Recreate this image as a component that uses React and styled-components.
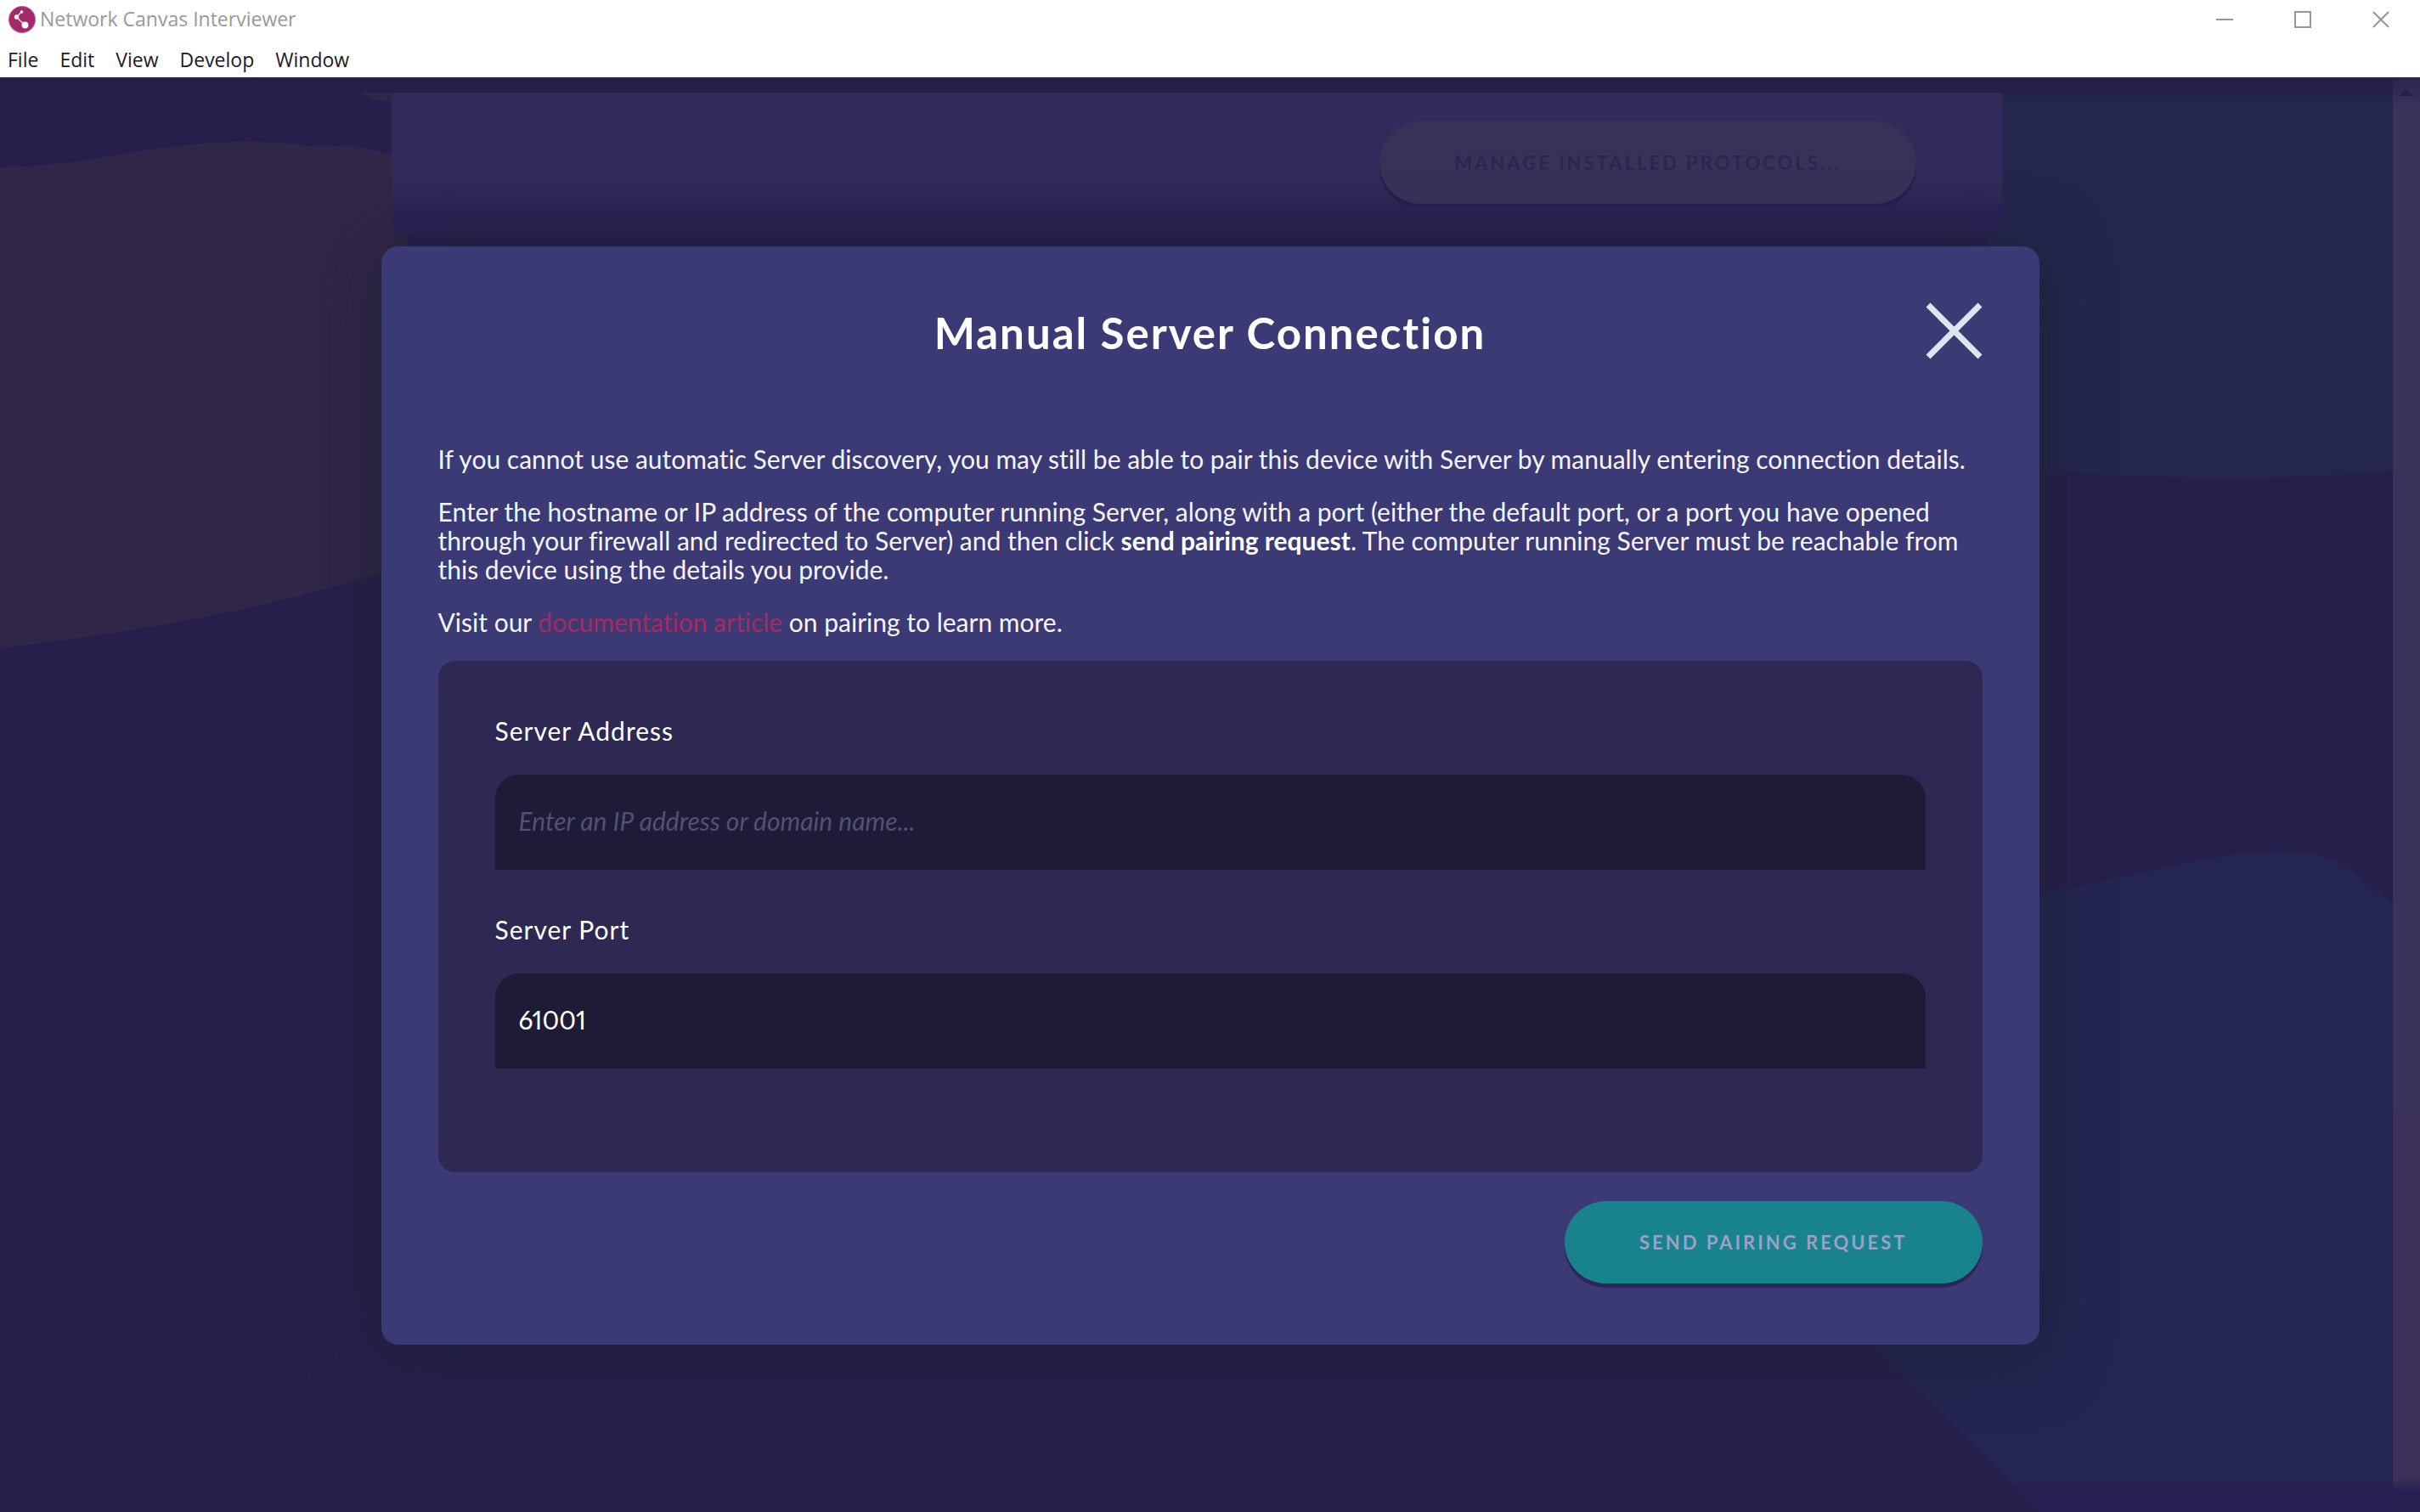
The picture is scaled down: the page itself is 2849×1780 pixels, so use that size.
import React from 'react';
import styled, { createGlobalStyle, css } from 'styled-components';

const font = {
  system: '"Open Sans", "Noto Sans", sans-serif',
  body: 'Lato, "Open Sans", sans-serif',
};

const GlobalStyle = createGlobalStyle`
  *, *::before, *::after { box-sizing: border-box; }
  body {
    margin: 0;
    background: #271f4b;
    color: #ffffff;
    font-family: ${font.body};
    font-variant-ligatures: none;
  }
  button, input { font: inherit; }
`;

const Window = styled.div`
  display: flex;
  flex-direction: column;
  min-height: 100vh;
`;

const TitleBar = styled.header`
  display: flex;
  align-items: center;
  height: 45px;
  padding-left: 10px;
  background: #ffffff;
  color: #999999;
  font-family: ${font.system};
`;

const AppName = styled.span`
  flex: 1;
  margin-left: 5px;
  font-size: 23px;
  line-height: 45px;
`;

const WindowButton = styled.button`
  display: flex;
  align-items: center;
  justify-content: center;
  width: 92px;
  height: 45px;
  padding: 0;
  border: 0;
  background: transparent;
`;

const MenuBar = styled.nav`
  display: flex;
  gap: 25px;
  height: 46px;
  padding-left: 9px;
  background: #ffffff;
`;

const MenuItem = styled.button`
  padding: 0;
  border: 0;
  background: transparent;
  color: #1b1b2d;
  font-family: ${font.system};
  font-size: 23px;
  line-height: 50px;
`;

const Stage = styled.main`
  position: relative;
  flex: 1;
  display: flex;
  align-items: center;
  justify-content: center;
  padding: 42px 48px 40px;
  overflow: hidden;
`;

const Backdrop = styled.div`
  position: absolute;
  inset: 0;
  display: flex;
`;

const Blobs = styled.svg`
  position: absolute;
  inset: 0;
  width: 100%;
  height: 100%;
`;

const Scroller = styled.div`
  position: relative;
  flex: 1;
  display: flex;
  justify-content: center;
  align-items: flex-start;
  padding-top: 18px;
`;

const Card = styled.section`
  display: flex;
  justify-content: flex-end;
  width: 100%;
  max-width: 1896px;
  padding: 34px 101px 38px;
  border-radius: 0 0 20px 20px;
  background: linear-gradient(#2e2a58, #322a5a 12px, #322a5a 65%, #2a2254 85%);
`;

const ScrollTrack = styled.div`
  position: relative;
  display: flex;
  flex-direction: column;
  align-items: center;
  width: 32px;
  padding-top: 14px;
  background: linear-gradient(#2b2452, #3a3058 30px, #3a3058 calc(100% - 40px), #2a2152 calc(100% - 24px));
`;

const ScrollThumb = styled.div`
  width: 100%;
  height: 71%;
  margin-top: 8px;
  background: #3b345a;
`;

const PillButton = styled.button`
  height: 97px;
  padding: 0 88px;
  border: 0;
  border-radius: 49px;
  font-size: 22px;
  font-weight: 700;
  letter-spacing: 3px;
  text-transform: uppercase;
  ${({ $tone }) =>
    $tone === 'primary'
      ? css`
          background: #19838d;
          color: #9c9fc6;
          box-shadow: 0 5px 0 #2a2755;
        `
      : css`
          background: #3a3158;
          color: #2c2550;
          box-shadow: 0 5px 0 #281f4e;
        `}
`;

const Dialog = styled.section`
  position: relative;
  display: flex;
  flex-direction: column;
  width: 100%;
  max-width: 1952px;
  padding: 66px 67px 67px;
  border-radius: 20px;
  background: #3b3a75;
  box-shadow: 0 8px 80px rgba(28, 32, 48, 0.8);
`;

const DialogHeader = styled.div`
  display: grid;
  grid-template-columns: 67px 1fr 67px;
  align-items: start;
  margin-bottom: 96px;
`;

const Title = styled.h1`
  grid-column: 2;
  margin: 0;
  font-size: 51px;
  font-weight: 700;
  line-height: 71px;
  letter-spacing: 2px;
  text-align: center;
`;

const CloseButton = styled.button`
  display: flex;
  padding: 0;
  border: 0;
  background: transparent;
`;

const Copy = styled.div`
  display: flex;
  flex-direction: column;
  gap: 28px;
  color: #f4f4fa;
  font-size: 30px;
  line-height: 34px;
`;

const Paragraph = styled.p`
  margin: 0;
`;

const Strong = styled.strong`
  color: #ffffff;
`;

const DocLink = styled.a`
  color: #a62b62;
  text-decoration: none;
`;

const Form = styled.form`
  display: flex;
  flex-direction: column;
  margin-top: 29px;
`;

const Fields = styled.div`
  padding: 67px;
  border-radius: 20px;
  background: #2d2953;
`;

const Field = styled.div`
  display: flex;
  flex-direction: column;
  gap: 37px;
  padding-bottom: 55px;
`;

const Label = styled.label`
  font-size: 30px;
  line-height: 30px;
  letter-spacing: 1px;
`;

const TextInput = styled.input`
  width: 100%;
  height: 112px;
  padding: 0 28px 4px;
  border: 0;
  border-radius: 28px 28px 0 0;
  outline: 0;
  background: #1e1b37;
  color: #ffffff;
  font-size: 30px;
  font-variant-numeric: proportional-nums;

  &::placeholder {
    color: #535074;
    font-style: italic;
    opacity: 1;
  }
`;

const Actions = styled.div`
  display: flex;
  justify-content: flex-end;
  padding: 34px 0 5px;
`;

const Logo = () => (
  <svg width="32" height="32" viewBox="0 0 32 32" aria-hidden="true">
    <circle cx="16" cy="16" r="16" fill="#c4628f" />
    <circle cx="16" cy="16" r="15" fill="#a22a68" />
    <path d="M15.5 7 9.5 13 19.5 23" fill="none" stroke="#f3dce8" strokeWidth="1.5" />
    <circle cx="15.5" cy="7" r="1.8" fill="#fff" />
    <circle cx="9.5" cy="13" r="2.7" fill="#fff" />
    <circle cx="19.5" cy="22.5" r="3.9" fill="#fff" />
  </svg>
);

const windowIcons = {
  Minimize: 'M0 10H20',
  Maximize: 'M1 1H19V19H1Z',
  Close: 'M1 1 19 19M19 1 1 19',
};

const menus = ['File', 'Edit', 'View', 'Develop', 'Window'];

const fields = [
  { id: 'server-address', label: 'Server Address', placeholder: 'Enter an IP address or domain name...' },
  { id: 'server-port', label: 'Server Port', defaultValue: '61001' },
];

const BackgroundBlobs = () => (
  <Blobs viewBox="0 0 2849 1689" preserveAspectRatio="none" aria-hidden="true">
    <path
      d="M0 106C80 104 110 95 170 86C230 77 290 72 350 79C370 83 385 81 400 81C430 82 450 87 480 98V570C400 605 230 645 0 672Z"
      fill="#302647"
    />
    <path d="M425 18H480V28H460C445 28 432 24 425 18Z" fill="#302647" />
    <path d="M2340 22H2849V458C2720 476 2560 476 2340 458Z" fill="#25264e" />
    <path
      d="M2100 1000C2280 990 2460 950 2560 928C2620 914 2660 911 2690 911C2760 912 2780 945 2817 973L2849 1000V1657H2370L2262 1550L2205 1493L2100 1390Z"
      fill="#252552"
    />
    <path d="M2370 1657H2849V1689H2400Z" fill="#281f52" />
  </Blobs>
);

export default function App() {
  return (
    <>
      <GlobalStyle />
      <Window>
        <TitleBar>
          <Logo />
          <AppName>Network Canvas Interviewer</AppName>
          {Object.entries(windowIcons).map(([name, path]) => (
            <WindowButton key={name} type="button" aria-label={name}>
              <svg width="20" height="20" viewBox="0 0 20 20">
                <path d={path} fill="none" stroke="#999499" strokeWidth="2" />
              </svg>
            </WindowButton>
          ))}
        </TitleBar>
        <MenuBar>
          {menus.map((name) => (
            <MenuItem key={name} type="button">{name}</MenuItem>
          ))}
        </MenuBar>

        <Stage>
          <Backdrop>
            <BackgroundBlobs />
            <Scroller>
              <Card>
                <PillButton type="button">Manage installed protocols...</PillButton>
              </Card>
            </Scroller>
            <ScrollTrack>
              <svg width="18" height="8" viewBox="0 0 18 8" aria-hidden="true">
                <path d="M9 0 18 8H0Z" fill="#281f4e" />
              </svg>
              <ScrollThumb />
            </ScrollTrack>
          </Backdrop>

          <Dialog role="dialog" aria-modal="true" aria-labelledby="dialog-title">
            <DialogHeader>
              <Title id="dialog-title">Manual Server Connection</Title>
              <CloseButton type="button" aria-label="Close">
                <svg width="67" height="67" viewBox="0 0 67 67">
                  <path d="M3 3 64 64M64 3 3 64" stroke="#dfe4ee" strokeWidth="7" />
                </svg>
              </CloseButton>
            </DialogHeader>
            <Copy>
              <Paragraph>
                If you cannot use automatic Server discovery, you may still be able to pair this device with Server by
                manually entering connection details.
              </Paragraph>
              <Paragraph>
                Enter the hostname or IP address of the computer running Server, along with a port (either the default
                port, or a port you have opened through your firewall and redirected to Server) and then click{' '}
                <Strong>send pairing request</Strong>. The computer running Server must be reachable from this device
                using the details you provide.
              </Paragraph>
              <Paragraph>
                Visit our <DocLink href="#documentation">documentation article</DocLink> on pairing to learn more.
              </Paragraph>
            </Copy>
            <Form>
              <Fields>
                {fields.map(({ id, label, ...input }) => (
                  <Field key={id}>
                    <Label htmlFor={id}>{label}</Label>
                    <TextInput id={id} type="text" {...input} />
                  </Field>
                ))}
              </Fields>
              <Actions>
                <PillButton type="submit" $tone="primary">Send pairing request</PillButton>
              </Actions>
            </Form>
          </Dialog>
        </Stage>
      </Window>
    </>
  );
}
